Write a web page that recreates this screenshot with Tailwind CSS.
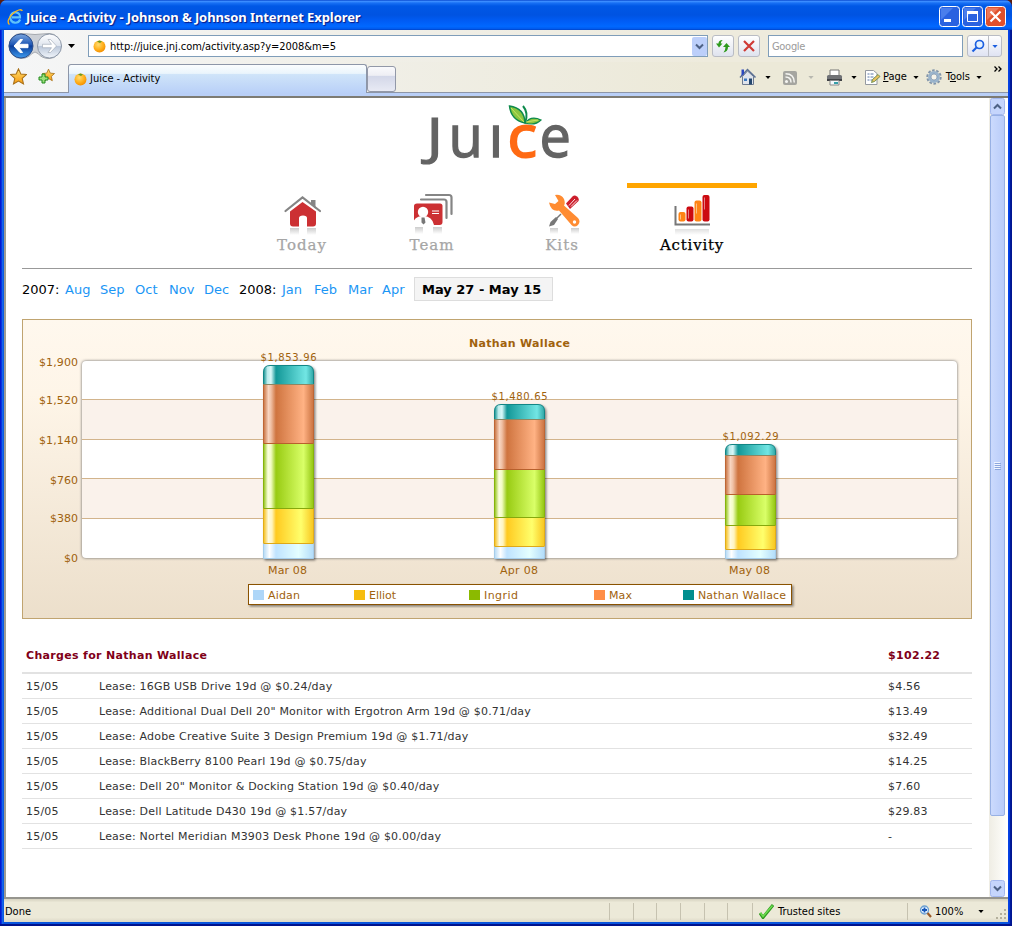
<!DOCTYPE html>
<html lang="en">
<head>
<meta charset="utf-8">
<title>Juice - Activity</title>
<script src="https://cdn.jsdelivr.net/npm/@tailwindcss/browser@4"></script>
</head>
<body class="w-[1012px] h-[926px] overflow-hidden bg-[#5a1e10] font-['DejaVu_Sans_Condensed','DejaVu_Sans',sans-serif] text-[11px] text-black">
<svg class="absolute size-0">
  <defs>
    <radialGradient id="orange" cx=".4" cy=".35" r=".7"><stop offset="0" stop-color="#ffdc70"/><stop offset=".6" stop-color="#ffae1a"/><stop offset="1" stop-color="#f28c00"/></radialGradient>
    <linearGradient id="gold" x2="0" y2="1"><stop offset="0" stop-color="#ffe070"/><stop offset="1" stop-color="#f79a10"/></linearGradient>
    <symbol id="fruit" viewBox="0 0 13 14"><circle cx="6.500" cy="7.500" r="6" fill="url(#orange)"/><path d="M4 2.500l2.500-1 2.500 1-2 1.500z" fill="#6a9a20"/></symbol>
    <symbol id="star" viewBox="0 0 16 16"><path d="M8 .8l2.200 4.900 5.200.5-3.900 3.600 1.200 5.200L8 12.300 3.300 15l1.200-5.200L.6 6.200l5.200-.5z" fill="url(#gold)" stroke="#a87018"/></symbol>
    <symbol id="down" viewBox="0 0 7 4"><path d="M0 0h7L3.500 4z" fill="currentColor"/></symbol>
  </defs>
</svg>
<div class="flex h-[926px] w-[1012px] flex-col overflow-hidden rounded-t-[7px] bg-[linear-gradient(to_right,#0019cf_0,#0019cf_1px,#0a32e0_1px,#0a32e0_2px,#166aee_2px,#0855dd_4px,#0855dd_1008px,#0845e8_1008px,#0038d8_1010px,#001da0_1010px,#00138c_1012px)] shadow-[inset_0_-2px_0_#00138c]">
  <!-- Title bar -->
  <div class="flex h-[30px] shrink-0 items-center bg-[linear-gradient(to_bottom,#0a4ad0_0,#3a8cff_5%,#1870f4_10%,#0058e6_20%,#0053e1_50%,#005cf5_70%,#0068ff_88%,#005cf0_95%,#0043c8)] pl-[7px] pr-[6px] pt-[3px]">
    <svg class="size-4" viewBox="0 0 16 16"><path d="M13.200 10.500C12 12.800 10 14 7.800 13.700 4.800 13.300 3 10.800 3.400 7.800 3.800 5 6.200 3 9 3.400c2.800.4 4.300 2.600 4 5H5" fill="none" stroke="#5fc2fa" stroke-width="2.200"/><path d="M2.500 15.500C-.5 13.500 2 8 6 4.500 10 1 14.500-.5 15.300 2" fill="none" stroke="#f6b81c" stroke-width="1.300"/></svg>
    <div class="ml-[3px] mt-[2px] whitespace-nowrap font-['Noto_Sans',sans-serif] text-[13px] font-bold tracking-[-0.09px] text-white [text-shadow:1px_1px_1px_#0a1883]">Juice - Activity - Johnson &amp; Johnson Internet Explorer</div>
    <div class="ml-auto flex gap-[2px]">
      <svg class="size-[21px]" viewBox="0 0 21 21"><rect x=".5" y=".5" width="20" height="20" rx="3" fill="#2a62e0" stroke="#fff"/><path d="M2 2h12L2 14z" fill="#6a9af8" opacity=".5"/><path d="M5 13h7v3H5z" fill="#fff"/></svg>
      <svg class="size-[21px]" viewBox="0 0 21 21"><rect x=".5" y=".5" width="20" height="20" rx="3" fill="#2a62e0" stroke="#fff"/><path d="M2 2h12L2 14z" fill="#6a9af8" opacity=".5"/><path d="M5.500 6v9.500h10V6" fill="none" stroke="#fff"/><path d="M5 5h11v3H5z" fill="#fff"/></svg>
      <svg class="size-[21px]" viewBox="0 0 21 21"><rect x=".5" y=".5" width="20" height="20" rx="3" fill="#e0502c" stroke="#fff"/><path d="M2 2h12L2 14z" fill="#f8a088" opacity=".5"/><path d="M5.500 5.500l10 10m0-10l-10 10" stroke="#fff" stroke-width="2.200"/></svg>
    </div>
  </div>

  <div class="mx-[4px] flex h-[892px] shrink-0 flex-col bg-white">
    <!-- Address row -->
    <div class="flex h-[32px] shrink-0 items-center bg-[linear-gradient(to_right,#f5f6f7,#f1f0ea_30%,#eeebdd_70%)] pl-[3px]">
      <svg class="h-[28px] w-[56px]" viewBox="0 0 56 28">
        <defs><linearGradient id="nb" x2="0" y2="1"><stop offset="0" stop-color="#7aa6e0"/><stop offset=".45" stop-color="#1d55b4"/><stop offset=".5" stop-color="#0b3d9a"/><stop offset="1" stop-color="#3e9cf0"/></linearGradient><linearGradient id="nf" x2="0" y2="1"><stop offset="0" stop-color="#fff"/><stop offset=".48" stop-color="#dfe5ee"/><stop offset=".5" stop-color="#b8c5d8"/><stop offset="1" stop-color="#f2f6fb"/></linearGradient></defs>
        <path d="M14 1.500q14 2 28 0a12 12.500 0 0 1 0 25q-7 0-11-5-3-3-6 0-4 5-11 5a12 12.500 0 0 1 0-25z" fill="#ccd0d6" stroke="#a4a8ae"/>
        <circle cx="14" cy="14" r="12" fill="url(#nb)" stroke="#2d4f8c"/><circle cx="42.500" cy="14" r="12" fill="url(#nf)" stroke="#8d98a8"/>
        <path d="M7 14l6-6.500h2.500L12 12.300h9v3.400h-9l3.500 4.800H13z" fill="#fff" stroke="#fff"/><path d="M49.500 14l-6-6.500H41l3.500 4.800h-9v3.400h9L41 20.500h2.500z" fill="#fff" stroke="#9aa4b2" stroke-width=".6"/>
      </svg>
      <svg class="ml-[5px] h-[4px] w-[7px]"><use href="#down"/></svg>
      <div class="ml-[13px] flex h-[22px] w-[620px] items-center border border-[#7f9db9] bg-white pl-[4px]">
        <svg class="h-[14px] w-[13px]"><use href="#fruit"/></svg>
        <div class="ml-[4px] mt-[2px] tracking-[-0.05px]">http://juice.jnj.com/activity.asp?y=2008&amp;m=5</div>
        <svg class="ml-auto h-[19px] w-[15px]" viewBox="0 0 15 19"><rect width="15" height="19" rx="2" fill="#bccffa"/><path d="M4 7.500l3.500 3.500L11 7.500" fill="none" stroke="#4d6185" stroke-width="2"/></svg>
      </div>
      <div class="ml-[4px] flex size-[22px] items-center justify-center rounded-[3px] border border-[#b9bcc4] bg-linear-to-b from-white to-[#dfe3ee]">
        <svg class="size-[16px] shrink-0" viewBox="0 0 16 16" fill="#2e9a1c"><path d="M4 2.500L7.500 6.500H5.700q0 2 2 3.500-4.200-.4-4.200-3.500H1L4 2.500z" transform="matrix(1 0 0 -1 0 12)"/><path d="M11.500 5L15 9h-2q0 4.500-4.500 5.500Q10.500 12 10.500 9H8z"/></svg>
      </div>
      <div class="ml-[4px] flex size-[22px] items-center justify-center rounded-[3px] border border-[#b9bcc4] bg-linear-to-b from-white to-[#dfe3ee]">
        <svg class="size-[12px]" viewBox="0 0 12 12"><path d="M1 1l10 10M11 1L1 11" stroke="#cf3a36" stroke-width="2.200"/></svg>
      </div>
      <div class="ml-[8px] flex h-[22px] w-[195px] items-center border border-[#7f9db9] bg-white pl-[3px] pt-[2px] tracking-[-0.3px] text-[#9b9b9b]">Google</div>
      <div class="ml-[4px] flex h-[22px] w-[35px] items-center rounded-[3px] border border-[#b9bcc4] bg-linear-to-b from-white to-[#dfe3f2]">
        <div class="flex h-full w-[21px] items-center justify-center border-r border-[#b9bcc4]"><svg class="size-[14px]" viewBox="0 0 14 14"><circle cx="8.500" cy="5.500" r="4" fill="#e4f1ff" stroke="#1c5fe0" stroke-width="1.700"/><path d="M5.500 8.500L1.500 12.500" stroke="#1c5fe0" stroke-width="2.200"/></svg></div>
        <svg class="ml-[3px] h-[3px] w-[6px] text-[#1c5fe0]"><use href="#down"/></svg>
      </div>
    </div>

    <!-- Tab and command row -->
    <div class="flex h-[31px] shrink-0 bg-[linear-gradient(to_right,#f5f6f7,#f1f0ea_30%,#ece9d8_70%)]">
      <div class="flex w-[64px] shrink-0 gap-[11px] border-b border-[#8d96a8] pl-[6px] pt-[6px]">
        <svg class="size-[17px]"><use href="#star"/></svg>
        <svg class="size-[17px]" viewBox="0 0 17 17"><use href="#star" x="4" y="0" width="13" height="14"/><path d="M4 6h3v3h3v3H7v3H4v-3H1V9h3z" fill="#9be07a" stroke="#218a1c"/></svg>
      </div>
      <div class="mt-[2px] flex w-[299px] shrink-0 items-center rounded-t-[3px] border border-b-0 border-[#8d96a8] bg-[linear-gradient(to_bottom,#fbfdfe_0,#eaf5fc_30%,#cfe4f9_34%,#b9d0f8)] pl-[5px]">
        <svg class="h-[14px] w-[13px]"><use href="#fruit"/></svg><div class="ml-[3px] mt-px">Juice - Activity</div>
      </div>
      <div class="flex w-[29px] shrink-0 border-b border-[#8d96a8] pt-[4px]"><div class="h-[26px] w-[29px] rounded-[3px] border border-[#9298a8] bg-[linear-gradient(to_bottom,#fafafc_0,#eeeef4_35%,#d3d7e8_38%,#e8eaf4)]"></div></div>
      <div class="flex grow items-center border-b border-[#8d96a8] pl-[343px]">
        <svg class="size-[18px] shrink-0" viewBox="0 0 18 18"><path d="M3.500 8.500L8.500 3l6 5.500v8h-11z" fill="#dfe4ec" stroke="#6e7b90"/><path d="M1 9.500L8.500 1.500l8 8" fill="none" stroke="#5a6f94" stroke-width="1.500"/><path d="M2.500 1.500H5V6L2.500 8z" fill="#2a48c0"/><path d="M5 10.500h3V13H5z" fill="#3c7ac0"/><path d="M10 10.500h3v6h-3z" fill="#25476e"/></svg>
        <svg class="ml-[8px] h-[3px] w-[6px] shrink-0"><use href="#down"/></svg>
        <svg class="ml-[12px] mt-[2px] size-[14px] shrink-0" viewBox="0 0 14 14"><rect width="14" height="14" rx="2" fill="#a5a5a0"/><circle cx="3.500" cy="10.500" r="1.500" fill="#f5f5f2"/><path d="M2.500 6q5.500 0 5.500 5.500M2.500 2.700q8.800 0 8.800 8.800" fill="none" stroke="#f5f5f2" stroke-width="1.500"/></svg>
        <svg class="ml-[11px] h-[3px] w-[6px] shrink-0 text-[#b8b8b0]"><use href="#down"/></svg>
        <svg class="ml-[12px] size-[17px] shrink-0" viewBox="0 0 17 17"><path d="M4 1h9v6H4z" fill="#fff" stroke="#777"/><path d="M1 7.500Q1 6 2.500 6h12Q16 6 16 7.500V12H1z" fill="#707276"/><path d="M1 10h15v2H1z" fill="#404246"/><path d="M4 11.500h9V16H4z" fill="#f5fafc" stroke="#888"/><path d="M8 13h4v2H8z" fill="#38a0a8"/></svg>
        <svg class="ml-[8px] h-[3px] w-[6px] shrink-0"><use href="#down"/></svg>
        <svg class="ml-[7px] size-[17px] shrink-0" viewBox="0 0 17 17"><path d="M1.500 1.500h8l3.500 3v11H1.500z" fill="#fff" stroke="#9499a0"/><path d="M3.500 5h2m1 0h3M3.500 8h2m1 0h3m-6 3h2m1 0h2" stroke="#5a78a8"/><path d="M7.500 13.500l1-3 5.500-5 2 2-5.500 5z" fill="#e8c060" stroke="#57803a" stroke-width=".8"/></svg>
        <div class="ml-[2px] mt-px tracking-[-0.05px]"><u>P</u>age</div>
        <svg class="ml-[6px] h-[3px] w-[6px] shrink-0"><use href="#down"/></svg>
        <svg class="ml-[7px] size-[16px] shrink-0" viewBox="0 0 16 16"><circle cx="8" cy="8" r="6.700" fill="none" stroke="#8295aa" stroke-width="2" stroke-dasharray="2.600 1.600"/><circle cx="8" cy="8" r="4.500" fill="#eef4fa" stroke="#9ab4cc" stroke-width="2.800"/><circle cx="8" cy="8" r="3" fill="#f5f3ea" stroke="#7890aa" stroke-width=".7"/></svg>
        <div class="ml-[4px] mt-px">T<u>o</u>ols</div>
        <svg class="ml-[6px] h-[3px] w-[6px] shrink-0"><use href="#down"/></svg>
        <svg class="mb-[17px] ml-[12px] h-[6px] w-[8px] shrink-0" viewBox="0 0 8 6"><path d="M.5.5L3 3 .5 5.500M4.500.5L7 3 4.500 5.500" fill="none" stroke="#000" stroke-width="1.300"/></svg>
      </div>
    </div>
    <div class="h-[3px] shrink-0 bg-[#b9cff7]"></div>
    <div class="h-[2px] shrink-0 bg-[#7d7b74]"></div>

    <!-- Document viewport -->
    <div class="flex h-[799px] shrink-0 border-l-2 border-[#9d9b93] bg-white">
      <div class="flex w-[983px] shrink-0 flex-col pl-[16px] font-['DejaVu_Sans',sans-serif]">
        <svg class="ml-[390px] h-[85px] w-[170px] shrink-0 overflow-visible" viewBox="412 98 170 85" font-family="Open Sans, sans-serif" font-size="59">
          <g fill="#636363" stroke="#636363" stroke-width="1.300"><text transform="translate(426.500 155) scale(1.100 .92)" font-size="56">J</text><text transform="translate(448.500 157) scale(.95 1)">u</text><text x="488.500" y="157">ı</text><text transform="translate(539.500 157) scale(.95 1)">e</text></g>
          <text transform="translate(507.500 157) scale(1.040 1)" fill="#ff6a13" stroke="#ff6a13" stroke-width="2">c</text>
          <path d="M525 123Q511 120 509.500 106q15 2 15.500 17z" fill="#8bc53f" stroke="#0d8a4c" stroke-width="1.500"/><path d="M525 123q6-8 16-3-6 6-16 3z" fill="#8bc53f" stroke="#0d8a4c" stroke-width="1.200"/><path d="M525 123q4-10-2-17" fill="none" stroke="#0d8a4c" stroke-width="2"/><path d="M511 108l13 14m2 0l12-2" stroke="#d4ec70" stroke-width=".8"/>
        </svg>
        <!-- Main navigation -->
        <div class="ml-[215px] flex h-[85px] shrink-0 text-center font-['DejaVu_Serif',serif] text-[15px] leading-[18px] tracking-[1px] text-[#a6a6a6] [-webkit-text-stroke:0.25px_currentColor]">
          <div class="w-[130px] border-t-5 border-transparent pt-[3px]">
            <svg class="mx-auto h-[45px] w-[42px]" viewBox="281 191 42 45"><defs><linearGradient id="fade" x2="0" y2="1"><stop offset="0" stop-color="#ccc"/><stop offset="1" stop-color="#fff"/></linearGradient></defs><path d="M290 228h9v7h-9zM307 228h9v7h-9z" fill="url(#fade)"/><path d="M311 200h4.500v9L311 204z" fill="#858585"/><path d="M285.500 211L302.500 197.500 320 211" fill="none" stroke="#858585" stroke-width="2.200" stroke-linecap="round"/><path d="M290 211.500L302.500 202 316 211.500V223.500q0 3-3 3h-6V218q0-2.500-4-2.500t-4 2.500v8.500h-6q-3 0-3-3z" fill="#cc3033"/></svg>
            <div>Today</div>
          </div>
          <div class="w-[130px] border-t-5 border-transparent pt-[3px]">
            <svg class="mx-auto h-[45px] w-[42px]" viewBox="411 191 42 45"><path d="M415 227h8v7h-8zM433 227h9v7h-9z" fill="url(#fade)"/><path d="M421 199.500h23q2.500 0 2.500 2.500v16M426 195h23q2.500 0 2.500 2.500V214" fill="none" stroke="#858585" stroke-width="2.200" stroke-linecap="round"/><path d="M417 203.500h23q2.500 0 2.500 2.500v16q0 3-3 3H414V206q0-2.500 3-2.500z" fill="#cc3033"/><circle cx="423" cy="212" r="5.200" fill="#fff"/><path d="M412 225q2-9 11-9t11 9z" fill="#fff"/><path d="M421.500 217.500h3l1 5-2 2-2-2z" fill="#777"/><path d="M432 211h7M432 213.500h7" stroke="#fff"/></svg>
            <div>Team</div>
          </div>
          <div class="w-[130px] border-t-5 border-transparent pt-[3px]">
            <svg class="mx-auto h-[45px] w-[42px]" viewBox="541 191 42 45"><path d="M550 228h8v6h-8zM571 228h8v6h-8z" fill="url(#fade)"/><path d="M566 203.500l6.500-7q2-2 4.500 0t1.500 4.500L570 209z" fill="#cc1e2c"/><path d="M569 205.500l6-6.500m-4 7.500l6-6" stroke="#fff" stroke-width=".9"/><path d="M561 214l-8 8" stroke="#777" stroke-width="1.500"/><path d="M556 217l2 2-4 6-5 1.500 1.500-4.500z" fill="#777"/><path d="M555 195q6-1 9 4 1.500 4 0 6.500L578 218q3 3.500 0 7-3.500 3-6.500 0L559 210.500q-8 1.500-10-8l6 1.500 3.500-3z" fill="#ff8c32"/><circle cx="574.500" cy="222" r="1.700" fill="#fff"/></svg>
            <div>Kits</div>
          </div>
          <div class="w-[130px] border-t-5 border-[#ffa500] pt-[3px] tracking-[0.8px] text-black">
            <svg class="mx-auto h-[45px] w-[42px]" viewBox="671 191 42 45"><path d="M675 229h34v6h-34z" fill="url(#fade)" opacity=".6"/><path d="M675.500 206v18.500H710" fill="none" stroke="#777" stroke-width="2"/><rect x="678.500" y="212" width="7" height="9.500" rx="2" fill="#ff8414"/><rect x="686.500" y="206.500" width="7" height="15" rx="2" fill="#cc0a10"/><rect x="694.500" y="200.500" width="7" height="21" rx="2" fill="#ff8414"/><rect x="702.500" y="195" width="7" height="26.500" rx="2" fill="#cc0a10"/><path d="M680.500 214.500v5m8-10v9m8-15v10m8-16v12" stroke="#fff" stroke-width=".8" opacity=".6"/></svg>
            <div>Activity</div>
          </div>
        </div>
        <div class="h-px w-[950px] shrink-0 bg-[#999]"></div>
        <!-- Month selector -->
        <div class="flex h-[50px] shrink-0 items-start whitespace-nowrap pt-[8px] text-[13px] leading-[25px] text-[#1b96f5]">
          <span class="w-[43px] text-black">2007:</span><span class="w-[35px]">Aug</span><span class="w-[35px]">Sep</span><span class="w-[34px]">Oct</span><span class="w-[35px]">Nov</span><span class="w-[35px]">Dec</span><span class="w-[43px] text-black">2008:</span><span class="w-[32px]">Jan</span><span class="w-[34px]">Feb</span><span class="w-[34px]">Mar</span><span class="w-[32px]">Apr</span>
          <span class="h-[24px] w-[139px] border border-[#ddd] bg-[#f4f4f4] pl-[7px] font-bold leading-[23px] text-black">May 27 - May 15</span>
        </div>
        <!-- Monthly spend chart -->
        <svg class="h-[300px] w-[950px] shrink-0" viewBox="22 319 950 300" font-size="11" fill="#a0620d">
          <defs>
            <linearGradient id="bg" x2="0" y2="1"><stop offset="0" stop-color="#fff8ee"/><stop offset=".25" stop-color="#fef5e8"/><stop offset="1" stop-color="#ecdfcb"/></linearGradient>
            <linearGradient id="teal"><stop offset="0" stop-color="#138f8f"/><stop offset=".08" stop-color="#bcecec"/><stop offset=".15" stop-color="#d8f8f8"/><stop offset=".25" stop-color="#129797"/><stop offset=".85" stop-color="#72e6e4"/><stop offset="1" stop-color="#2fa5a5"/></linearGradient>
            <linearGradient id="rust"><stop offset="0" stop-color="#c7703e"/><stop offset=".1" stop-color="#f8d5c0"/><stop offset=".15" stop-color="#f0c0a4"/><stop offset=".25" stop-color="#cf743f"/><stop offset=".8" stop-color="#ffb284"/><stop offset="1" stop-color="#ca7240"/></linearGradient>
            <linearGradient id="lime"><stop offset="0" stop-color="#8fc010"/><stop offset=".09" stop-color="#fbffe0"/><stop offset=".15" stop-color="#f2fcc4"/><stop offset=".25" stop-color="#98cb12"/><stop offset=".8" stop-color="#d9ff68"/><stop offset="1" stop-color="#92c510"/></linearGradient>
            <linearGradient id="yel"><stop offset="0" stop-color="#f4bd18"/><stop offset=".1" stop-color="#fffbe0"/><stop offset=".17" stop-color="#fff4c0"/><stop offset=".25" stop-color="#ffca20"/><stop offset=".75" stop-color="#ffff6c"/><stop offset="1" stop-color="#f8c51e"/></linearGradient>
            <linearGradient id="sky"><stop offset="0" stop-color="#b4d9f5"/><stop offset=".12" stop-color="#fff"/><stop offset=".25" stop-color="#bfe3ff"/><stop offset=".7" stop-color="#e4ffff"/><stop offset="1" stop-color="#b2dcfa"/></linearGradient>
            <filter id="sh" x="-10%" y="-10%" width="125%" height="125%" color-interpolation-filters="sRGB"><feDropShadow dx="1.500" dy="1.500" stdDeviation="1.300" flood-color="#000" flood-opacity=".45"/></filter>
            <filter id="glow" x="-5%" y="-5%" width="110%" height="110%" color-interpolation-filters="sRGB"><feDropShadow dx="0" dy="0" stdDeviation="1.600" flood-color="#555" flood-opacity=".9"/></filter>
          </defs>
          <rect x="22.500" y="319.500" width="949" height="299" fill="url(#bg)" stroke="#c0a470"/>
          <rect x="82" y="361" width="875" height="197" rx="4" fill="#fff" filter="url(#glow)"/>
          <path d="M82 400h875v39H82zM82 479h875v39H82z" fill="#faf2eb"/>
          <path d="M82 399.500h875M82 439.500h875M82 478.500h875M82 518.500h875" stroke="#d2b48c"/>
          <text x="519.500" y="347" text-anchor="middle" font-weight="bold" textLength="101">Nathan Wallace</text>
          <text x="39" y="366" textLength="39">$1,900</text><text x="39" y="404" textLength="39">$1,520</text><text x="39" y="444" textLength="39">$1,140</text><text x="50" y="484" textLength="28">$760</text><text x="50" y="522" textLength="28">$380</text><text x="64" y="562" textLength="14">$0</text>
          <g filter="url(#sh)" stroke-width="1">
            <path d="M263.500 384.500V372q0-6.500 6.500-6.500h37q6.500 0 6.500 6.500v12.500z" fill="url(#teal)" stroke="#128686"/>
            <path d="M263.500 384.500h50v59h-50z" fill="url(#rust)" stroke="#be6635"/><path d="M263.500 443.500h50v65h-50z" fill="url(#lime)" stroke="#86b30c"/><path d="M263.500 508.500h50v35h-50z" fill="url(#yel)" stroke="#e2ae18"/><path d="M263.500 543.500h50v15h-50z" fill="url(#sky)" stroke="#a6cdea"/>
            <path d="M263.500 384.500h50" stroke="#8c8662"/><path d="M263.500 443.500h50" stroke="#b8602c"/><path d="M263.500 508.500h50" stroke="#86a80c"/><path d="M263.500 543.500h50" stroke="#dfa818"/>
          </g>
          <g filter="url(#sh)">
            <path d="M494.500 419.500V411q0-6.500 6.500-6.500h37q6.500 0 6.500 6.500v8.500z" fill="url(#teal)" stroke="#128686"/>
            <path d="M494.500 419.500h50v50h-50z" fill="url(#rust)" stroke="#be6635"/><path d="M494.500 469.500h50v48h-50z" fill="url(#lime)" stroke="#86b30c"/><path d="M494.500 517.500h50v29h-50z" fill="url(#yel)" stroke="#e2ae18"/><path d="M494.500 546.500h50v12h-50z" fill="url(#sky)" stroke="#a6cdea"/>
            <path d="M494.500 419.500h50" stroke="#8c8662"/><path d="M494.500 469.500h50" stroke="#b8602c"/><path d="M494.500 517.500h50" stroke="#86a80c"/><path d="M494.500 546.500h50" stroke="#dfa818"/>
          </g>
          <g filter="url(#sh)">
            <path d="M725.500 455.500V451q0-6.500 6.500-6.500h37q6.500 0 6.500 6.500v4.500z" fill="url(#teal)" stroke="#128686"/>
            <path d="M725.500 455.500h50v39h-50z" fill="url(#rust)" stroke="#be6635"/><path d="M725.500 494.500h50v31h-50z" fill="url(#lime)" stroke="#86b30c"/><path d="M725.500 525.500h50v24h-50z" fill="url(#yel)" stroke="#e2ae18"/><path d="M725.500 549.500h50v9h-50z" fill="url(#sky)" stroke="#a6cdea"/>
            <path d="M725.500 455.500h50" stroke="#8c8662"/><path d="M725.500 494.500h50" stroke="#b8602c"/><path d="M725.500 525.500h50" stroke="#86a80c"/><path d="M725.500 549.500h50" stroke="#dfa818"/>
          </g>
          <g font-size="10"><text x="260.500" y="361" textLength="56">$1,853.96</text><text x="491.500" y="400" textLength="56">$1,480.65</text><text x="722.500" y="440" textLength="56">$1,092.29</text></g>
          <text x="268" y="574" textLength="39">Mar 08</text><text x="500" y="574" textLength="38">Apr 08</text><text x="729" y="574" textLength="41">May 08</text>
          <rect x="248.500" y="584.500" width="543" height="20" fill="#fff" stroke="#8a5200" filter="url(#sh)"/>
          <path d="M253 590h11v10h-11z" fill="#aed6f8"/><path d="M354 590h11v10h-11z" fill="#f6bd0f"/><path d="M469 590h11v10h-11z" fill="#8bba00"/><path d="M594 590h11v10h-11z" fill="#ff8e46"/><path d="M683 590h11v10h-11z" fill="#008e8e"/>
          <text x="268" y="599" textLength="32">Aidan</text><text x="369" y="599" textLength="27">Elliot</text><text x="484" y="599" textLength="34">Ingrid</text><text x="609" y="599" textLength="23">Max</text><text x="698" y="599" textLength="88">Nathan Wallace</text>
        </svg>
        <!-- Charges -->
        <div class="mt-[19px] grid w-[950px] grid-cols-[77px_789px_1fr] text-[11px] tracking-[0.2px] text-[#333]">
          <div class="col-span-3 flex h-[36px] items-center border-b-2 border-[#e2e2e2] pl-[4px] pt-[3px] font-bold tracking-[0.32px] text-[#800018]"><span class="w-[862px]">Charges for Nathan Wallace</span><span>$102.22</span></div>
          <div class="col-span-3 grid h-[25px] grid-cols-subgrid items-center border-b border-[#e2e2e2] pt-[3px]"><span class="pl-[4px]">15/05</span><span>Lease: 16GB USB Drive 19d @ $0.24/day</span><span>$4.56</span></div>
          <div class="col-span-3 grid h-[25px] grid-cols-subgrid items-center border-b border-[#e2e2e2] pt-[3px]"><span class="pl-[4px]">15/05</span><span>Lease: Additional Dual Dell 20" Monitor with Ergotron Arm 19d @ $0.71/day</span><span>$13.49</span></div>
          <div class="col-span-3 grid h-[25px] grid-cols-subgrid items-center border-b border-[#e2e2e2] pt-[3px]"><span class="pl-[4px]">15/05</span><span>Lease: Adobe Creative Suite 3 Design Premium 19d @ $1.71/day</span><span>$32.49</span></div>
          <div class="col-span-3 grid h-[25px] grid-cols-subgrid items-center border-b border-[#e2e2e2] pt-[3px]"><span class="pl-[4px]">15/05</span><span>Lease: BlackBerry 8100 Pearl 19d @ $0.75/day</span><span>$14.25</span></div>
          <div class="col-span-3 grid h-[25px] grid-cols-subgrid items-center border-b border-[#e2e2e2] pt-[3px]"><span class="pl-[4px]">15/05</span><span>Lease: Dell 20" Monitor &amp; Docking Station 19d @ $0.40/day</span><span>$7.60</span></div>
          <div class="col-span-3 grid h-[25px] grid-cols-subgrid items-center border-b border-[#e2e2e2] pt-[3px]"><span class="pl-[4px]">15/05</span><span>Lease: Dell Latitude D430 19d @ $1.57/day</span><span>$29.83</span></div>
          <div class="col-span-3 grid h-[25px] grid-cols-subgrid items-center border-b border-[#e2e2e2] pt-[3px]"><span class="pl-[4px]">15/05</span><span>Lease: Nortel Meridian M3903 Desk Phone 19d @ $0.00/day</span><span>-</span></div>
        </div>
      </div>
      <!-- Scrollbar -->
      <div class="flex w-[17px] shrink-0 flex-col bg-linear-to-r from-[#efede4] to-[#fefefb] px-px">
        <svg class="h-[17px] w-[15px] shrink-0" viewBox="0 0 15 17"><rect x=".5" y=".5" width="14" height="16" rx="2" fill="#c5d5fc" stroke="#a4b8ee"/><path d="M4 10.500L7.500 7l3.500 3.500" fill="none" stroke="#4d6185" stroke-width="2"/></svg>
        <div class="flex h-[701px] w-[15px] shrink-0 items-center justify-center rounded-[2px] border border-[#98b1e4] bg-linear-to-r from-[#cbdafd] to-[#b9ccf9]"><svg class="h-[8px] w-[7px]" viewBox="0 0 7 8"><path d="M0 .5h6M0 2.500h6M0 4.500h6M0 6.500h6" stroke="#f0f5ff"/><path d="M1 1.500h6M1 3.500h6M1 5.500h6M1 7.500h6" stroke="#8ca6dd"/></svg></div>
        <svg class="mt-auto h-[17px] w-[15px] shrink-0" viewBox="0 0 15 17"><rect x=".5" y=".5" width="14" height="16" rx="2" fill="#c5d5fc" stroke="#a4b8ee"/><path d="M4 6.500L7.500 10 11 6.500" fill="none" stroke="#4d6185" stroke-width="2"/></svg>
      </div>
    </div>
    <!-- Status bar -->
    <div class="flex h-[25px] shrink-0 items-center border-t-2 border-[#96958e] bg-[linear-gradient(to_bottom,#d6d2c0_0,#ece9d8_15%,#ece9d8_80%,#dcd8c6)] pl-[1px] pt-[2px]">
      <div class="w-[604px] pt-[2px]">Done</div>
      <div class="grid h-[17px] w-[144px] grid-cols-6 divide-x divide-[#c6c2b0] border-x border-[#c6c2b0]"><i></i><i></i><i></i><i></i><i></i><i></i></div>
      <svg class="ml-[6px] size-[15px]" viewBox="0 0 15 15"><path d="M1 9l3 4.500L14 1" fill="none" stroke="#2f9a20" stroke-width="3"/><path d="M1.500 9L4 12.500 13.500 1.500" fill="none" stroke="#6ddc50" stroke-width="1.500"/></svg>
      <div class="ml-[4px] w-[129px] pt-[2px]">Trusted sites</div>
      <div class="h-[17px] w-px bg-[#c6c2b0]"></div>
      <svg class="ml-[11px] size-[13px]" viewBox="0 0 13 13"><circle cx="5.500" cy="5" r="4" fill="#e0f0ff" stroke="#6b9fd0" stroke-width="1.300"/><path d="M8.500 8l3.500 4" stroke="#9a5a28" stroke-width="2.200"/><path d="M5.500 2.500v5M3 5h5" stroke="#1656b8" stroke-width="1.800"/></svg>
      <div class="ml-[3px] w-[43px] pt-[2px]">100%</div>
      <svg class="h-[3px] w-[6px]"><use href="#down"/></svg>
      <svg class="ml-auto mt-[7px] size-[12px]" viewBox="0 0 12 12"><path d="M8 0h2v2H8zM4 4h2v2H4zM8 4h2v2H8zM0 8h2v2H0zM4 8h2v2H4zM8 8h2v2H8z" fill="#b4b09c"/></svg>
    </div>
  </div>
</div>
</body>
</html>
